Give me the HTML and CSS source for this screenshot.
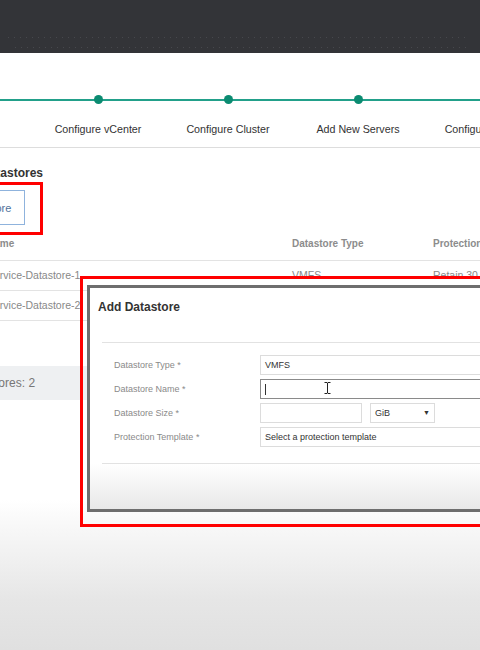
FILE: index.html
```html
<!DOCTYPE html>
<html lang="en">

<head>
  <meta charset="UTF-8">
  <meta name="viewport" content="width=device-width, initial-scale=1.0">
  <title>Datastores</title>
  <link rel="stylesheet" href="styles.css">
</head>

<body>
  <div class="topbar">
    <div class="dots"></div>
    <div class="dots dots-2"></div>
  </div>

  <div class="stepper">
    <div class="step">
      <div class="track"><span class="dot"></span></div>
      <div class="step-label">Welcome</div>
    </div>
    <div class="step">
      <div class="track"><span class="dot"></span></div>
      <div class="step-label">Configure vCenter</div>
    </div>
    <div class="step">
      <div class="track"><span class="dot"></span></div>
      <div class="step-label">Configure Cluster</div>
    </div>
    <div class="step">
      <div class="track"><span class="dot"></span></div>
      <div class="step-label">Add New Servers</div>
    </div>
    <div class="step">
      <div class="track"><span class="dot"></span></div>
      <div class="step-label">Configure Storage</div>
    </div>
  </div>

  <div class="page">
    <h2 class="page-title">Datastores</h2>

    <div class="toolbar">
      <div class="mark">
        <button class="btn">Add Datastore</button>
        <span class="mark-box"></span>
      </div>
    </div>

    <div class="table">
      <div class="row head">
        <div>Name</div>
        <div>Datastore Type</div>
        <div>Protection Template</div>
      </div>
      <div class="row">
        <div>Service-Datastore-1</div>
        <div>VMFS</div>
        <div>Retain 30 Days</div>
      </div>
      <div class="row">
        <div>Service-Datastore-2</div>
        <div>VMFS</div>
        <div>Retain 30 Days</div>
      </div>
    </div>

    <div class="summary"><span>Total Datastores: 2</span></div>
  </div>

  <!-- popup + its highlight sit over the page -->
  <div class="modal-mark"></div>
  <div class="modal">
    <div class="modal-title">Add Datastore</div>
    <div class="modal-body">
      <div class="field">
        <label>Datastore Type *</label>
        <div class="input">VMFS</div>
      </div>
      <div class="field">
        <label>Datastore Name *</label>
        <div class="input input-focus">
          <span class="caret"></span>
          <svg class="ibeam" width="7" height="12" viewBox="0 0 7 12">
            <path d="M0.5 0.5h2.5l0.5 0.6 0.5-0.6h2.5M3.5 1v10M0.5 11.5h2.5l0.5-0.6 0.5 0.6h2.5" fill="none" stroke="#222" stroke-width="1" />
          </svg>
        </div>
      </div>
      <div class="field">
        <label>Datastore Size *</label>
        <div class="size">
          <div class="input size-input"></div>
          <div class="input select">GiB <span class="arrow">&#9660;</span></div>
        </div>
      </div>
      <div class="field">
        <label>Protection Template *</label>
        <div class="input">Select a protection template</div>
      </div>
    </div>
    <div class="modal-foot"></div>
  </div>
</body>

</html>
```

FILE: styles.css
```css
* {
  margin: 0;
  padding: 0;
  box-sizing: border-box;
}

body {
  width: 480px;
  height: 650px;
  overflow: hidden;
  position: relative;
  font-family: "Liberation Sans", Arial, sans-serif;
  background: linear-gradient(to bottom, #fff 0, #fff 500px, #f7f7f7 530px, #e6e6e6 600px, #e0e0e0 650px);
}

/* top dark bar */
.topbar {
  height: 53px;
  background: #333438;
  padding-top: 37px;
}

.topbar .dots {
  height: 1px;
  margin: 0 10px 0 8px;
  background: repeating-linear-gradient(to right, #47484d 0, #47484d 1px, transparent 1px, transparent 6px);
}

.topbar .dots-2 {
  margin-top: 9px;
  margin-left: 15px;
}

/* wizard steps */
.stepper {
  display: flex;
  margin-left: -97px;
  padding: 42px 0 11px;
  border-bottom: 1px solid #dddddd;
}

.stepper .step {
  flex: 0 0 130px;
  text-align: center;
}

.stepper .track {
  height: 9px;
  display: flex;
  justify-content: center;
  background: linear-gradient(#22a08a, #22a08a) center / 100% 2px no-repeat;
}

.stepper .dot {
  width: 9px;
  height: 9px;
  border-radius: 50%;
  background: #0b8b71;
}

.stepper .step-label {
  margin-top: 18px;
  font-size: 10.7px;
  line-height: 14px;
  color: #333;
  white-space: nowrap;
}

/* datastores list */
.page {
  padding-top: 17px;
}

.page-title {
  margin-left: -19px;
  font-size: 12px;
  font-weight: bold;
  line-height: 16px;
  color: #333;
}

.toolbar {
  display: flex;
  margin-top: 9px;
  margin-left: -73px;
}

.mark {
  position: relative;
}

.btn {
  display: block;
  width: 98px;
  height: 35px;
  padding: 0 13px;
  border: 1px solid #8fb3dd;
  background: #fff;
  color: #51739c;
  font-family: inherit;
  font-size: 11px;
  text-align: right;
  white-space: nowrap;
}

.mark-box {
  position: absolute;
  top: -8px;
  right: -18px;
  bottom: -10px;
  left: -12px;
  border: 3px solid #ff0000;
}

.table {
  margin-top: 12px;
  margin-left: -13px;
}

.table .row {
  display: grid;
  grid-template-columns: 305px 141px 1fr;
  padding: 7px 0 8px;
  border-bottom: 1px solid #e3e3e3;
  font-size: 10.5px;
  line-height: 14px;
  color: #888;
  white-space: nowrap;
}

.table .row.head {
  padding: 0 0 9px;
  font-size: 10px;
  font-weight: bold;
  color: #8c8c8c;
}

.summary {
  margin-top: 45px;
  height: 34px;
  line-height: 34px;
  background: #eef0f2;
  font-size: 12px;
  color: #777;
  white-space: nowrap;
}

.summary span {
  margin-left: -65px;
}

/* popup */
.modal-mark {
  position: absolute;
  left: 80px;
  top: 276px;
  width: 420px;
  height: 251px;
  border: 3px solid #ff0000;
}

.modal {
  position: absolute;
  left: 87px;
  top: 285px;
  width: 420px;
  height: 227px;
  display: flex;
  flex-direction: column;
  border: 3px solid #6e6e6e;
  background: #fff;
}

.modal .modal-title {
  padding: 11px 8px 0;
  font-size: 12px;
  font-weight: bold;
  line-height: 16px;
  color: #333;
}

.modal .modal-body {
  margin: 27px 0 0 12px;
  padding: 12px 0 16px 12px;
  display: flex;
  flex-direction: column;
  gap: 4px;
  border-top: 1px solid #e2e2e2;
  border-bottom: 1px solid #e2e2e2;
}

.modal .field {
  display: grid;
  grid-template-columns: 146px 1fr;
  align-items: center;
  height: 20px;
}

.modal .field label {
  font-size: 9px;
  color: #8a8a8a;
  white-space: nowrap;
}

.modal .input {
  position: relative;
  height: 20px;
  padding: 0 4px;
  border: 1px solid #dcdcdc;
  font-size: 9px;
  line-height: 18px;
  color: #333;
  white-space: nowrap;
}

.modal .input-focus {
  border-color: #8a8a8a;
}

.modal .caret {
  display: inline-block;
  width: 1px;
  height: 11px;
  margin-top: 4px;
  background: #333;
  vertical-align: top;
}

.modal .ibeam {
  position: absolute;
  left: 63px;
  top: 2px;
}

.modal .size {
  display: flex;
  gap: 8px;
}

.modal .size-input {
  width: 102px;
}

.modal .select {
  width: 65px;
  display: flex;
  justify-content: space-between;
}

.modal .arrow {
  font-size: 7px;
  color: #333;
}

.modal .modal-foot {
  flex: 1;
  background: linear-gradient(#fff, #e8e8e8);
}
```
